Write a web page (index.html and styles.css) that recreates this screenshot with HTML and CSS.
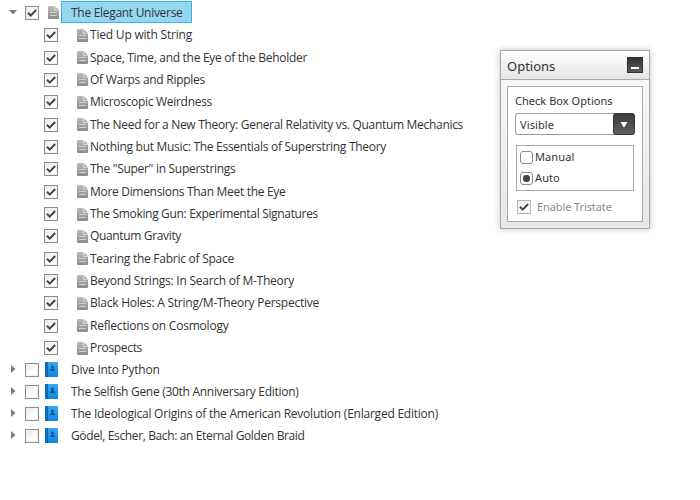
FILE: index.html
```
<!DOCTYPE html>
<html lang="en">
<head>
<meta charset="utf-8">
<title>Tree options</title>
<link rel="stylesheet" href="styles.css">
</head>
<body>
<svg class="defs" width="0" height="0" aria-hidden="true">
  <defs>
    <linearGradient id="pageFill" x1="0" y1="0" x2="0" y2="1"><stop offset="0" stop-color="#bababa"/><stop offset="1" stop-color="#8b8b8b"/></linearGradient>
    <linearGradient id="bookFill" x1="0" y1="0" x2="0" y2="1"><stop offset="0" stop-color="#35aaf0"/><stop offset="1" stop-color="#1285dc"/></linearGradient>
    <symbol id="page" viewBox="0 0 11 13"><path fill="url(#pageFill)" d="M1 0H6V4.5H11V12Q11 13 10 13H1Q0 13 0 12V1Q0 0 1 0Z"/><path fill="#b2b2b2" d="M6.5 0L10.8 4H6.5Z"/><path stroke="#cfcfcf" d="M2 6.5H9M2 9.5H9"/></symbol>
    <symbol id="book" viewBox="0 0 13 15"><rect width="13" height="15" rx=".7" fill="url(#bookFill)"/><rect width="2" height="15" fill="#0d70ba"/><path stroke="#075594" stroke-width=".8" d="M2.4 0V15"/><path fill="#075594" d="M7.5 3.5a1.4 1.4 0 0 1 .8 2.6v.8L10 7.8V9H5V7.8l1.7-.9v-.8a1.4 1.4 0 0 1 .8-2.6Z"/></symbol>
    <symbol id="tick" viewBox="0 0 14 14"><path fill="none" stroke="#444" stroke-width="2" d="M3 6.8L5.7 9.6L11.2 4"/></symbol>
  </defs>
</svg>
<main class="layout">
  <ul class="tree" id="tree"></ul>
  <section class="panel">
    <header class="panel-head"><h1>Options</h1><button class="collapse" aria-label="Collapse"><i></i></button></header>
    <div class="panel-body">
      <div class="label">Check Box Options</div>
      <div class="select"><span>Visible</span><b><svg width="8" height="5" viewBox="0 0 8 5"><path fill="#fff" d="M.5 0H7.5L4.6 5H3.4Z"/></svg></b></div>
      <div class="radios">
        <div class="radio"><i></i><span>Manual</span></div>
        <div class="radio on"><i></i><span>Auto</span></div>
      </div>
      <div class="tristate"><span class="check"><svg width="14" height="14"><use href="#tick"/></svg></span><span>Enable Tristate</span></div>
    </div>
  </section>
</main>
<script src="tree.js"></script>
</body>
</html>
```
FILE: styles.css
```
* { box-sizing: border-box; }
body { margin: 0; background: #fff; color: #333; font: 12px/16px "Open Sans", "Noto Sans", sans-serif; }
.defs { display: block; height: 0; }
.layout { display: flex; align-items: flex-start; height: 500px; overflow: hidden; }
.tree { width: 500px; margin: 0; padding: 1px 0 0; list-style: none; }
.row { display: flex; align-items: center; height: 22px; }
.row svg, .check { flex: none; display: block; }
.arrow { width: 10px; height: 10px; margin: 0 7px 0 8px; fill: #7c7c7c; }
.check { width: 14px; height: 14px; background: linear-gradient(135deg, #e6e6e6, #fff 60%); border: 1px solid #8c8c8c; box-shadow: inset 0 0 0 1px #f2f2f2; }
.check svg { margin: -1px; }
.name { white-space: nowrap; }
.parent .check { margin-top: 1px; }
.parent .page { margin: 1px 2px 0 9px; }
.parent .book { margin-left: 6px; }
.parent .name { margin: 2px 0 0 13px; }
.parent.open .name { width: 131px; height: 22px; margin: 0; padding: 3px 0 1px 9px; background: #95d7f3; border: 1px solid #38b2e5; }
.child { height: 22.36px; padding: 2px 0 0 44px; }
.child .page { margin: 0 2px 0 19px; }
.panel { width: 150px; height: 179px; margin-top: 50px; padding: 0 6px 6px; border: 1px solid #a8a8a8; background: linear-gradient(#fafafa, #e7e7e7); box-shadow: 0 0 6px rgba(0,0,0,.25); font-family: "Noto Sans", "Open Sans", sans-serif; }
.panel-head { display: flex; justify-content: space-between; align-items: center; height: 29px; margin: 0 -6px 6px; padding: 0 6px; border-bottom: 1px solid #aaa; background: linear-gradient(#fff, #e4e4e4); }
.panel-head h1 { margin: 2px 0 0; font-size: 13px; font-weight: 400; letter-spacing: 0; }
.collapse { width: 16px; height: 16px; padding: 0; border: 1px solid #303030; background: linear-gradient(#333, #5b5b5b); display: flex; justify-content: center; align-items: flex-end; }
.collapse i { width: 8px; height: 2px; margin-bottom: 3px; background: #fff; }
.panel-body { height: 136px; padding: 5px 7px; border: 1px solid #aaa; background: #fff; font-size: 11px; }
.label { height: 21px; line-height: 17px; letter-spacing: .03px; }
.select { display: flex; justify-content: space-between; align-items: center; width: 120px; height: 22px; padding-left: 4px; border: 1px solid #999; border-radius: 3px; letter-spacing: .1px; }
.select span { margin-top: 1px; }
.select b { width: 22px; height: 22px; margin-right: -1px; border: 1px solid #333; border-radius: 3px; background: linear-gradient(#3c3c3c, #606060); display: grid; place-items: center; }
.radios { width: 118px; height: 46px; margin: 10px 0 0 1px; padding: 1px 3px; border: 1px solid #aaa; }
.radio { display: flex; align-items: center; height: 21px; gap: 2px; letter-spacing: .1px; }
.radio span { margin-top: -1px; }
.radio i { width: 13px; height: 13px; border: 1px solid #8b8b8b; border-radius: 3px; background: #fff; display: grid; place-items: center; }
.radio.on i::after { content: ""; width: 7px; height: 7px; border-radius: 3px; background: #444; }
.tristate { display: flex; align-items: center; gap: 6px; height: 16px; margin: 8px 0 0 2px; color: #8c8c8c; letter-spacing: -.1px; }
.tristate .check { border-color: #b5b5b5; }
```
FILE: tree.js
```
const children = [
  ["Tied Up with String", 102], ["Space, Time, and the Eye of the Beholder", 217],
  ["Of Warps and Ripples", 115], ["Microscopic Weirdness", 122],
  ["The Need for a New Theory: General Relativity vs. Quantum Mechanics", 373],
  ["Nothing but Music: The Essentials of Superstring Theory", 296],
  ["The \"Super\" in Superstrings", 145.5], ["More Dimensions Than Meet the Eye", 195.5],
  ["The Smoking Gun: Experimental Signatures", 228], ["Quantum Gravity", 91],
  ["Tearing the Fabric of Space", 144], ["Beyond Strings: In Search of M-Theory", 204],
  ["Black Holes: A String/M-Theory Perspective", 229],
  ["Reflections on Cosmology", 138.5], ["Prospects", 52]
];
const books = [
  ["Dive Into Python", 88.5], ["The Selfish Gene (30th Anniversary Edition)", 227.5],
  ["The Ideological Origins of the American Revolution (Enlarged Edition)", 367],
  ["Gödel, Escher, Bach: an Eternal Golden Braid", 233.5]
];
const tick = '<svg width="14" height="14"><use href="#tick"/></svg>';
const page = '<svg class="page" width="11" height="13"><use href="#page"/></svg>';
const book = '<svg class="book" width="13" height="15"><use href="#book"/></svg>';
const tree = document.getElementById("tree");

function addRow(kind, icon, checked, [title, width]) {
  const li = document.createElement("li");
  li.className = "row " + kind;
  const arrow = kind.startsWith("parent")
    ? `<svg class="arrow" viewBox="0 0 10 10"><path d="${kind.includes("open") ? "M1 3H9L5.5 7H4.5Z" : "M3 1L7.5 5L3 9Z"}"/></svg>` : "";
  li.innerHTML = `${arrow}<span class="check">${checked ? tick : ""}</span>${icon}<span class="name"><span class="text"></span></span>`;
  const text = li.querySelector(".text");
  text.textContent = title;
  tree.append(li);
  const natural = text.getBoundingClientRect().width;
  text.style.letterSpacing = (width - natural) / title.length + "px";
}

addRow("parent open", page, true, ["The Elegant Universe", 111.5]);
children.forEach(c => addRow("child", page, true, c));
books.forEach(b => addRow("parent", book, false, b));
```
